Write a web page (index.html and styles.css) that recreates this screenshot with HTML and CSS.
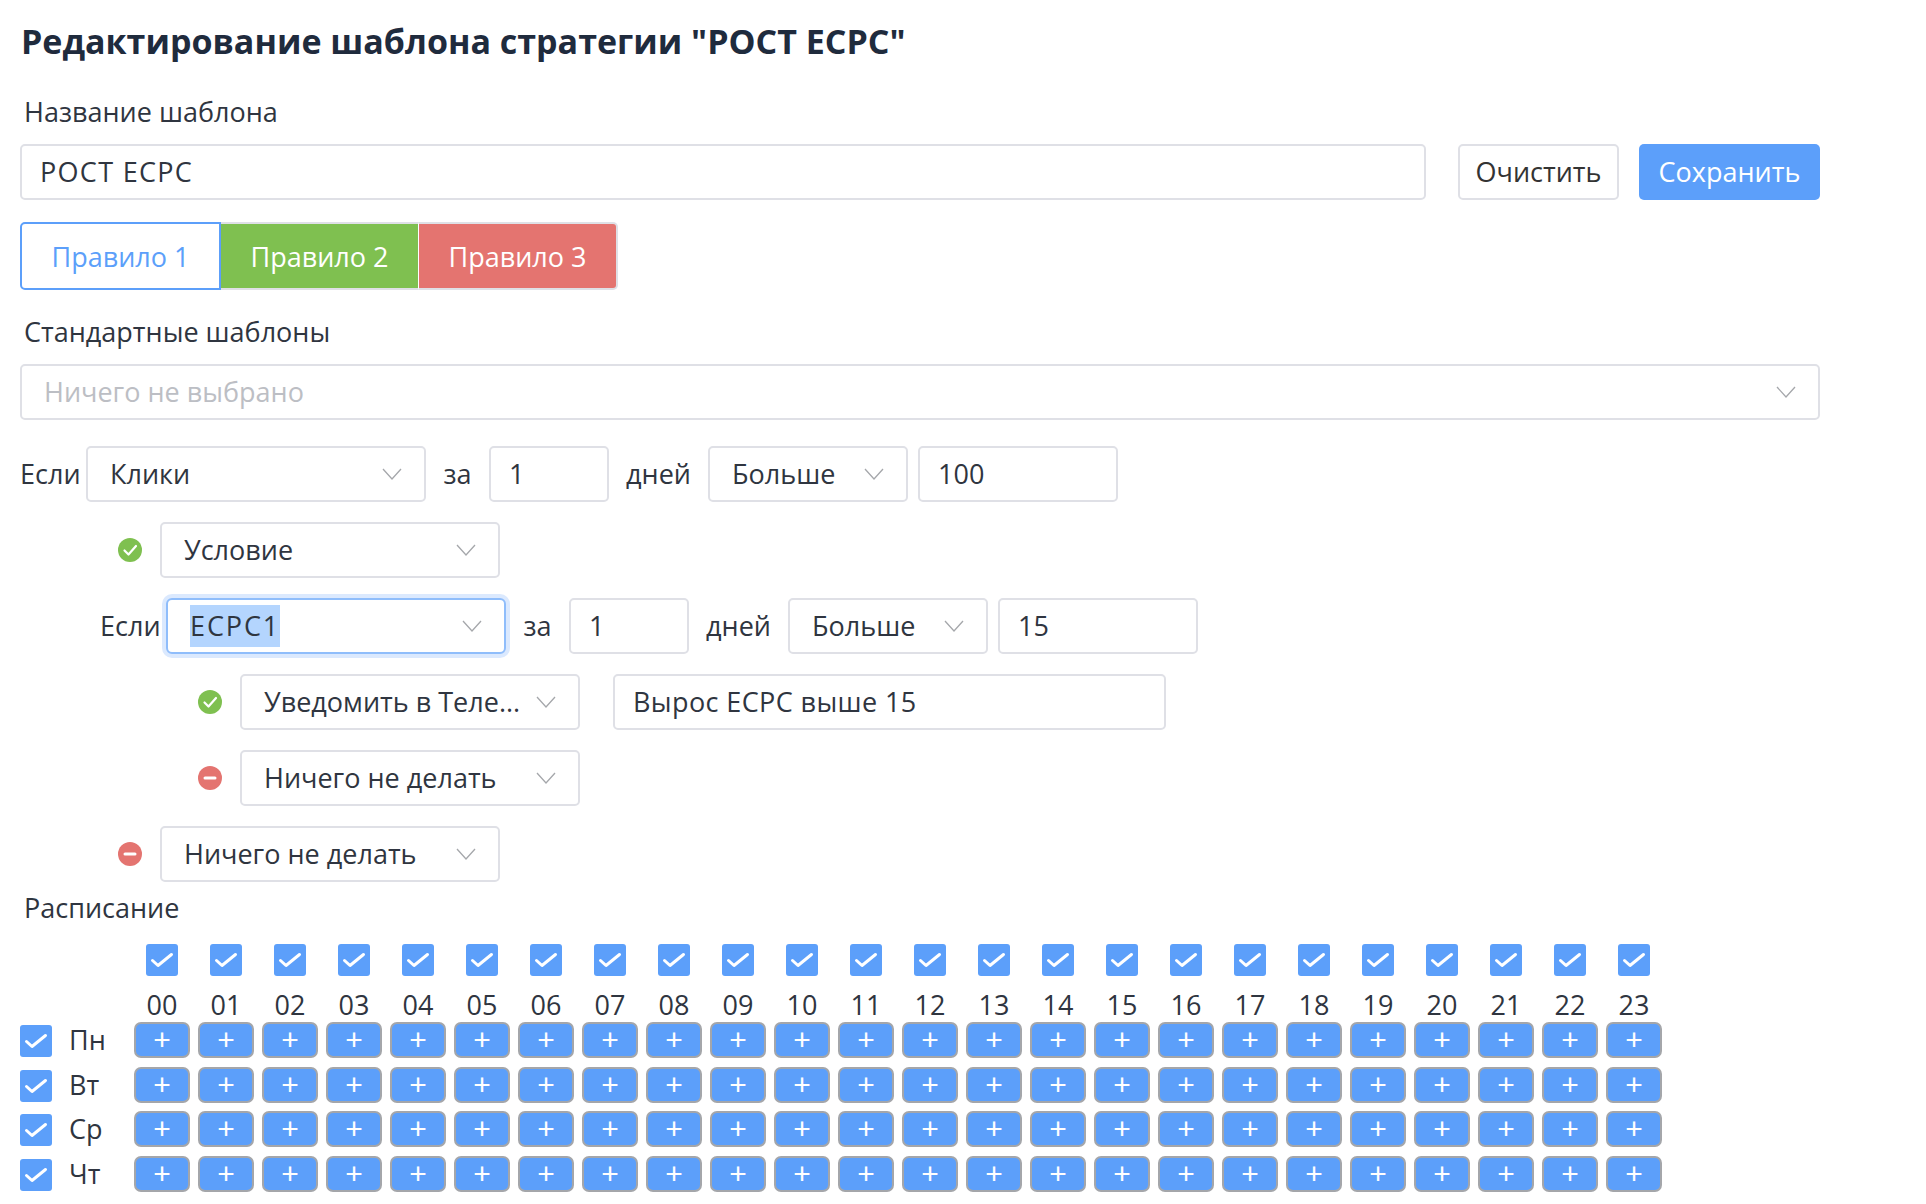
FILE: index.html
```html
<!DOCTYPE html>
<html lang="ru">
<head>
<meta charset="utf-8">
<title>Редактирование шаблона стратегии</title>
<link rel="stylesheet" href="styles.css">
</head>
<body>
<svg class="defs" width="0" height="0" aria-hidden="true">
<symbol id="chev" viewBox="0 0 20 12"><path d="M1 1l9 10 9-10" fill="none" stroke="currentColor" stroke-width="1.3"/></symbol>
<symbol id="chk" viewBox="0 0 32 32"><path d="M6.5 16.5l5.5 5L25.500 10.500" fill="none" stroke="#fff" stroke-width="3" stroke-linecap="round" stroke-linejoin="round"/></symbol>
<symbol id="ok" viewBox="0 0 24 24"><circle cx="12" cy="12" r="12" fill="#7fc050"/><path d="M6.500 12.500l4 4 7.500-8.500" fill="none" stroke="#fff" stroke-width="2.200" stroke-linecap="round" stroke-linejoin="round"/></symbol>
<symbol id="no" viewBox="0 0 24 24"><circle cx="12" cy="12" r="12" fill="#e47470"/><path d="M7 12h10" fill="none" stroke="#fff" stroke-width="3" stroke-linecap="round"/></symbol>
</svg>
<main class="page">
<h1 class="title">Редактирование шаблона стратегии "РОСТ ЕСРС"</h1>
<div class="label label-name">Название шаблона</div>
<div class="name-row">
<div class="field name-field">РОСТ ЕСРС</div>
<div class="btn btn-plain">Очистить</div>
<div class="btn btn-primary">Сохранить</div>
</div>
<div class="tabs">
<div class="tab tab-active">Правило 1</div>
<div class="tab tab-green">Правило 2</div>
<div class="tab tab-red">Правило 3</div>
</div>
<div class="label label-std">Стандартные шаблоны</div>
<div class="select select-full placeholder"><span>Ничего не выбрано</span><svg class="chev"><use href="#chev"/></svg></div>

<div class="row row-first">
<span class="w-if">Если</span>
<div class="select s-main"><span>Клики</span><svg class="chev"><use href="#chev"/></svg></div>
<span class="w-za">за</span>
<div class="field s-num">1</div>
<span class="w-days">дней</span>
<div class="select s-cmp"><span>Больше</span><svg class="chev"><use href="#chev"/></svg></div>
<div class="field s-val">100</div>
</div>

<div class="row indent-1">
<svg class="status"><use href="#ok"/></svg>
<div class="select s-main"><span>Условие</span><svg class="chev"><use href="#chev"/></svg></div>
</div>

<div class="row indent-if">
<span class="w-if">Если</span>
<div class="select s-main focused"><span class="selected">ЕСРС1</span><svg class="chev"><use href="#chev"/></svg></div>
<span class="w-za">за</span>
<div class="field s-num">1</div>
<span class="w-days">дней</span>
<div class="select s-cmp"><span>Больше</span><svg class="chev"><use href="#chev"/></svg></div>
<div class="field s-val">15</div>
</div>

<div class="row indent-2">
<svg class="status"><use href="#ok"/></svg>
<div class="select s-main"><span>Уведомить в Теле...</span><svg class="chev"><use href="#chev"/></svg></div>
<div class="field s-msg">Вырос ЕСРС выше 15</div>
</div>

<div class="row indent-2">
<svg class="status"><use href="#no"/></svg>
<div class="select s-main"><span>Ничего не делать</span><svg class="chev"><use href="#chev"/></svg></div>
</div>

<div class="row indent-1">
<svg class="status"><use href="#no"/></svg>
<div class="select s-main"><span>Ничего не делать</span><svg class="chev"><use href="#chev"/></svg></div>
</div>

<div class="label label-sched">Расписание</div>

<div class="sched-head">
<i class="c"><svg><use href="#chk"/></svg></i><i class="c"><svg><use href="#chk"/></svg></i><i class="c"><svg><use href="#chk"/></svg></i><i class="c"><svg><use href="#chk"/></svg></i><i class="c"><svg><use href="#chk"/></svg></i><i class="c"><svg><use href="#chk"/></svg></i><i class="c"><svg><use href="#chk"/></svg></i><i class="c"><svg><use href="#chk"/></svg></i><i class="c"><svg><use href="#chk"/></svg></i><i class="c"><svg><use href="#chk"/></svg></i><i class="c"><svg><use href="#chk"/></svg></i><i class="c"><svg><use href="#chk"/></svg></i><i class="c"><svg><use href="#chk"/></svg></i><i class="c"><svg><use href="#chk"/></svg></i><i class="c"><svg><use href="#chk"/></svg></i><i class="c"><svg><use href="#chk"/></svg></i><i class="c"><svg><use href="#chk"/></svg></i><i class="c"><svg><use href="#chk"/></svg></i><i class="c"><svg><use href="#chk"/></svg></i><i class="c"><svg><use href="#chk"/></svg></i><i class="c"><svg><use href="#chk"/></svg></i><i class="c"><svg><use href="#chk"/></svg></i><i class="c"><svg><use href="#chk"/></svg></i><i class="c"><svg><use href="#chk"/></svg></i>
</div>
<div class="sched-nums">
<span>00</span><span>01</span><span>02</span><span>03</span><span>04</span><span>05</span><span>06</span><span>07</span><span>08</span><span>09</span><span>10</span><span>11</span><span>12</span><span>13</span><span>14</span><span>15</span><span>16</span><span>17</span><span>18</span><span>19</span><span>20</span><span>21</span><span>22</span><span>23</span>
</div>
<div class="day">
<i class="c day-c"><svg><use href="#chk"/></svg></i><span class="day-name">Пн</span>
<b>+</b><b>+</b><b>+</b><b>+</b><b>+</b><b>+</b><b>+</b><b>+</b><b>+</b><b>+</b><b>+</b><b>+</b><b>+</b><b>+</b><b>+</b><b>+</b><b>+</b><b>+</b><b>+</b><b>+</b><b>+</b><b>+</b><b>+</b><b>+</b>
</div>
<div class="day">
<i class="c day-c"><svg><use href="#chk"/></svg></i><span class="day-name">Вт</span>
<b>+</b><b>+</b><b>+</b><b>+</b><b>+</b><b>+</b><b>+</b><b>+</b><b>+</b><b>+</b><b>+</b><b>+</b><b>+</b><b>+</b><b>+</b><b>+</b><b>+</b><b>+</b><b>+</b><b>+</b><b>+</b><b>+</b><b>+</b><b>+</b>
</div>
<div class="day">
<i class="c day-c"><svg><use href="#chk"/></svg></i><span class="day-name">Ср</span>
<b>+</b><b>+</b><b>+</b><b>+</b><b>+</b><b>+</b><b>+</b><b>+</b><b>+</b><b>+</b><b>+</b><b>+</b><b>+</b><b>+</b><b>+</b><b>+</b><b>+</b><b>+</b><b>+</b><b>+</b><b>+</b><b>+</b><b>+</b><b>+</b>
</div>
<div class="day">
<i class="c day-c"><svg><use href="#chk"/></svg></i><span class="day-name">Чт</span>
<b>+</b><b>+</b><b>+</b><b>+</b><b>+</b><b>+</b><b>+</b><b>+</b><b>+</b><b>+</b><b>+</b><b>+</b><b>+</b><b>+</b><b>+</b><b>+</b><b>+</b><b>+</b><b>+</b><b>+</b><b>+</b><b>+</b><b>+</b><b>+</b>
</div>
</main>
</body>
</html>
```
FILE: styles.css
```css
* { box-sizing: border-box; }
html, body { margin: 0; background: #fff; }
body { font-family: "Open Sans", "Noto Sans", sans-serif; font-size: 27px; color: #2f3540; overflow: hidden; }
.defs { position: absolute; }
.page { width: 1820px; padding-left: 20px; }
.title { margin: 19px 0 0; font-size: 34px; line-height: 44px; font-weight: 700; color: #1f2b3d; padding-left: 1px; }
.label { padding-left: 4px; line-height: 34px; }
.label-name { margin-top: 32px; }
.label-std { margin-top: 25px; }
.label-sched { margin-top: 9px; }
.name-row { display: flex; margin-top: 15px; }
.field, .select { height: 56px; border: 2px solid #dfe0e6; border-radius: 5px; background: #fff; display: flex; align-items: center; flex: none; padding-bottom: 2px; }
.field { padding-left: 18px; }
.select { padding-left: 22px; padding-right: 22px; justify-content: space-between; white-space: nowrap; }
.select-full { margin-top: 15px; width: 100%; }
.name-field { width: 1406px; letter-spacing: 1.3px; }
.btn { height: 56px; border-radius: 5px; display: flex; align-items: center; justify-content: center; padding-bottom: 2px; }
.btn-plain { width: 161px; margin-left: 32px; border: 2px solid #dfe0e6; color: #333; }
.btn-primary { width: 181px; margin-left: 20px; background: #5c9ffa; color: #fff; }
.tabs { display: flex; margin-top: 22px; width: 598px; height: 68px; }
.tab { display: flex; align-items: center; justify-content: center; flex: 1; color: #fff; border: 2px solid #dfe0e6; padding-top: 1px; }
.tab-active { flex: none; width: 201px; background: #fff; color: #5c9ffa; border-color: #5c9ffa; border-radius: 5px 0 0 5px; }
.tab-green { background: #7fc050; border-width: 2px 1px 2px 0; border-right-color: #fff; }
.tab-red { background: #e47470; border-width: 2px 2px 2px 0; border-radius: 0 5px 5px 0; }
.placeholder { color: #bcbec4; }
.chev { width: 20px; height: 12px; color: #a5a7ab; flex: none; margin-top: 2px; }
.row { display: flex; align-items: center; margin-top: 20px; }
.row-first { margin-top: 26px; }
.indent-if { padding-left: 80px; }
.indent-1 { padding-left: 98px; }
.indent-2 { padding-left: 178px; }
.status { width: 24px; height: 24px; margin-right: 18px; flex: none; }
.w-if { width: 66px; margin-top: -2px; }
.w-za { width: 63px; text-align: center; margin-top: -2px; }
.w-days { width: 99px; text-align: center; margin-top: -2px; }
.s-main { width: 340px; }
.s-num { width: 120px; }
.s-cmp { width: 200px; }
.s-val { width: 200px; margin-left: 10px; }
.s-msg { width: 553px; margin-left: 33px; letter-spacing: .4px; }
.focused { border-color: #8fbdfb; box-shadow: 0 0 0 4px #dbe9fe; border-radius: 6px; }
.selected { display: inline-block; line-height: 42px; background: #b4d5fe; letter-spacing: 1.9px; margin-top: 2px; }
.sched-head { display: flex; margin-top: 19px; padding-left: 126px; }
.c { display: block; width: 32px; height: 32px; border-radius: 3px; background: #5c9ffa; flex: none; }
.c svg { display: block; width: 32px; height: 32px; }
.sched-head .c { margin-right: 32px; }
.sched-nums { display: flex; padding-left: 114px; height: 46px; padding-top: 11px; }
.sched-nums span { width: 56px; margin-right: 8px; line-height: 36px; text-align: center; flex: none; font-size: 27px; }
.day { display: flex; align-items: center; margin-bottom: 8.6px; height: 36px; }
.day-c { margin-top: 2px; }
.day-name { width: 65px; margin-left: 17px; flex: none; padding-bottom: 1px; }
.day b { flex: none; width: 56px; height: 36px; margin-right: 8px; border: 2px solid #a4a6aa; border-radius: 7px; background: #5c9ffa; color: #fff; display: flex; align-items: center; justify-content: center; font-family: "Liberation Sans", sans-serif; font-weight: 400; font-size: 30px; line-height: 1; }
```
